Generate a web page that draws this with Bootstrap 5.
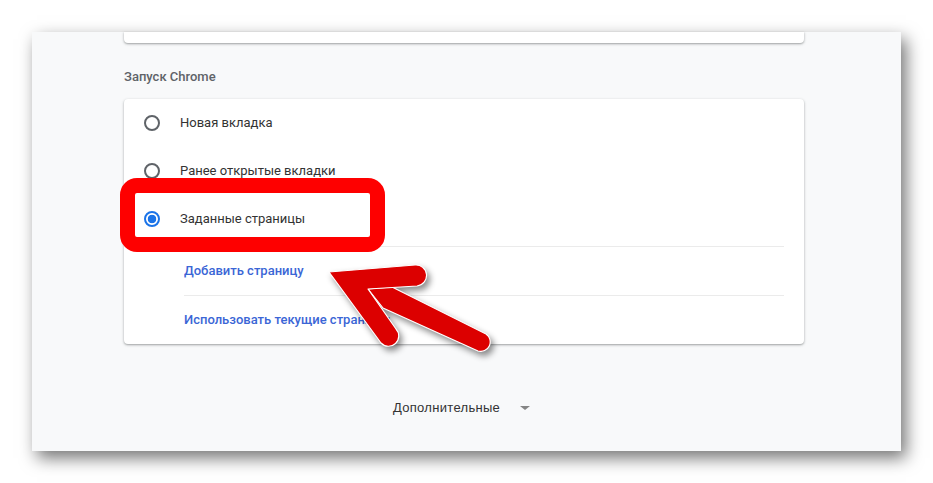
<!DOCTYPE html>
<html lang="ru">
<head>
  <meta charset="UTF-8">
  <meta name="viewport" content="width=device-width, initial-scale=1.0">
  <title>Запуск Chrome</title>
  <link href="https://cdn.jsdelivr.net/npm/bootstrap@5.3.0/dist/css/bootstrap.min.css" rel="stylesheet">
  <style>
    html, body { height: 483px; overflow: hidden; }
    body { background: #fff; font-family: Roboto, "Liberation Sans", sans-serif; font-size: 13px; padding: 32px; position: relative; }
    .settings-panel { width: 869px; height: 419px; background: #f8f9fa; box-shadow: 5px 7px 16px rgba(0, 0, 0, .55); padding: 0 97px 0 92px; }
    .settings-card { border: 0; border-radius: 4px; box-shadow: 0 1px 2px rgba(60, 64, 67, .4), 0 1px 3px 1px rgba(60, 64, 67, .08); }
    .top-stub { height: 11px; border-radius: 0 0 4px 4px; }
    .section-title { color: #5f6368; font-weight: 500; line-height: 18px; margin: 25px 0 13px; }
    .radio-row { height: 48px; padding-left: 20px; color: #333; }
    .radio-row .form-check-input { width: 16px; height: 16px; margin: 0 20px 0 0; flex: none; border: 2px solid #5f6368; background: #fff; }
    .radio-row .form-check-input:checked { border-color: #1a73e8; background: radial-gradient(circle, #1a73e8 0 4px, #fff 4.6px); }
    .link-row { height: 49px; margin: 0 20px 0 60px; border-top: 1px solid #ebebeb; color: #3b66d6; font-weight: 500; white-space: nowrap; overflow: hidden; }
    .radio-list { padding-bottom: 3px; }
    .more-row { color: #333; margin-top: 55px; margin-left: 269px; line-height: 18px; font-family: "Liberation Sans", sans-serif; letter-spacing: .3px; }
    .more-caret { width: 0; height: 0; border: 5px solid transparent; border-top: 4px solid #858585; border-bottom: 0; margin-left: 20px; }
    .red-frame { position: absolute; left: 120px; top: 178px; width: 265px; height: 74px; border: 15px solid #fe0000; border-radius: 17px; }
    .red-arrow { position: absolute; left: 0; top: 0; width: 933px; height: 483px; filter: drop-shadow(3px 4px 3px rgba(0, 0, 0, .45)); }
    .red-arrow path { fill: #dc0000; stroke: #fff; stroke-width: 1.2; stroke-linejoin: round; }
  </style>
</head>
<body>
  <div class="settings-panel">
    <div class="card settings-card top-stub"></div>
    <div class="section-title">Запуск Chrome</div>
    <div class="card settings-card">
      <div class="radio-list">
        <label class="radio-row d-flex align-items-center"><input class="form-check-input" type="radio" name="startup">Новая вкладка</label>
        <label class="radio-row d-flex align-items-center"><input class="form-check-input" type="radio" name="startup">Ранее открытые вкладки</label>
        <label class="radio-row d-flex align-items-center"><input class="form-check-input" type="radio" name="startup" checked>Заданные страницы</label>
      </div>
      <div class="link-row d-flex align-items-center">Добавить страницу</div>
      <div class="link-row d-flex align-items-center">Использовать текущие страницы</div>
    </div>
    <div class="more-row d-flex align-items-center">Дополнительные<span class="more-caret"></span></div>
  </div>

  <div class="red-frame"></div>
  <svg class="red-arrow" viewBox="0 0 933 483">
    <path d="M368 289 L392 287 L486 334 A9.5 9.5 0 0 1 478 351 L383 308 Z"/>
    <path d="M329 272 L415 265 A10.5 10.5 0 0 1 417 286 L368 289 L396 329 A10 10 0 0 1 381 343 Z"/>
  </svg>

  <script src="https://cdn.jsdelivr.net/npm/bootstrap@5.3.0/dist/js/bootstrap.bundle.min.js"></script>
</body>
</html>
